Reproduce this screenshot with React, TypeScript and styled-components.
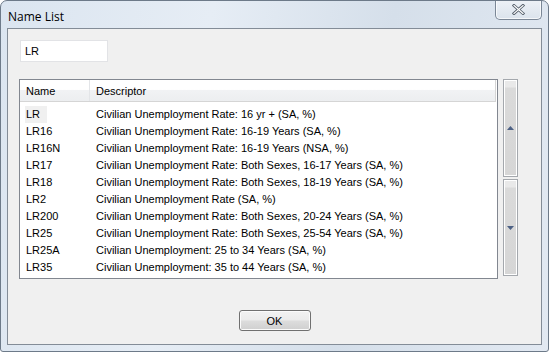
import React from 'react';
import styled, { createGlobalStyle } from 'styled-components';

const GlobalStyle = createGlobalStyle`
  html, body {
    margin: 0;
    padding: 0;
    background: #ffffff;
  }
  body {
    font-family: 'Liberation Sans', Arial, sans-serif;
  }
`;

const ROWS: [string, string][] = [
  ['LR', 'Civilian Unemployment Rate: 16 yr + (SA, %)'],
  ['LR16', 'Civilian Unemployment Rate: 16-19 Years (SA, %)'],
  ['LR16N', 'Civilian Unemployment Rate: 16-19 Years (NSA, %)'],
  ['LR17', 'Civilian Unemployment Rate: Both Sexes, 16-17 Years (SA, %)'],
  ['LR18', 'Civilian Unemployment Rate: Both Sexes, 18-19 Years (SA, %)'],
  ['LR2', 'Civilian Unemployment Rate (SA, %)'],
  ['LR200', 'Civilian Unemployment Rate: Both Sexes, 20-24 Years (SA, %)'],
  ['LR25', 'Civilian Unemployment Rate: Both Sexes, 25-54 Years (SA, %)'],
  ['LR25A', 'Civilian Unemployment: 25 to 34 Years (SA, %)'],
  ['LR35', 'Civilian Unemployment: 35 to 44 Years (SA, %)'],
];

const Window = styled.div`
  width: 549px;
  height: 352px;
  box-sizing: border-box;
  border: 1px solid #6d7a89;
  border-radius: 7px 7px 3px 3px;
  background: linear-gradient(100deg, #dbe5f0 0%, #e6edf5 35%, #d5dfea 65%, #e2e9f2 100%);
  display: flex;
  flex-direction: column;
  overflow: hidden;
`;

const TitleBar = styled.div`
  height: 27px;
  display: flex;
  align-items: flex-start;
  padding-left: 7px;
`;

const Title = styled.div`
  font-family: 'Open Sans', 'Noto Sans', sans-serif;
  font-size: 12px;
  color: #000;
  margin-top: 7px;
`;

const CloseButton = styled.div`
  margin-left: auto;
  margin-right: 6px;
  margin-top: -1px;
  width: 47px;
  height: 20px;
  box-sizing: border-box;
  border: 1px solid #7b8796;
  border-top: none;
  border-radius: 0 0 5px 5px;
  background: linear-gradient(#eef2f7, #dbe3ec);
  box-shadow: inset 0 0 0 1px rgba(255, 255, 255, 0.7);
  display: flex;
  align-items: center;
  justify-content: center;
`;

const Client = styled.div`
  flex: 1;
  margin: 0 6px 6px 6px;
  border: 1px solid #838c97;
  background: #f0f0f0;
  display: flex;
  flex-direction: column;
  padding: 11px 0 0 11px;
`;

const SearchBox = styled.div`
  width: 88px;
  height: 22px;
  box-sizing: border-box;
  margin-left: 1px;
  border: 1px solid #e2e3e6;
  background: #fff;
  font-size: 11px;
  color: #000;
  padding: 4px 0 0 4px;
`;

const ListRow = styled.div`
  display: flex;
  margin-top: 17px;
  align-items: flex-start;
`;

const ListBox = styled.div`
  width: 479px;
  height: 200px;
  box-sizing: border-box;
  border: 1px solid #828790;
  background: #fff;
  overflow: hidden;
`;

const Header = styled.div`
  display: flex;
  height: 22px;
  width: 476px;
  box-sizing: border-box;
  background: linear-gradient(#ffffff 0%, #ffffff 45%, #f1f2f4 50%, #eceef0 100%);
  border-bottom: 1px solid #d5d5d5;
  border-right: 1px solid #d5d5d5;
  font-size: 11px;
`;

const HeaderCell = styled.div<{ $w?: number }>`
  ${(p) => (p.$w ? `width: ${p.$w}px;` : 'flex: 1;')}
  box-sizing: border-box;
  padding: 5px 0 0 6px;
  border-right: ${(p) => (p.$w ? '1px solid #e3e5e8' : 'none')};
`;

const Rows = styled.div`
  padding-top: 4px;
`;

const Row = styled.div`
  display: flex;
  height: 17px;
  font-size: 11px;
  line-height: 17px;
  color: #000;
`;

const NameCell = styled.div<{ $selected?: boolean }>`
  width: 70px;
  box-sizing: border-box;
  padding-left: 6px;
  span {
    display: inline-block;
    padding: 0 7px 0 1px;
    margin-left: -1px;
    background: ${(p) => (p.$selected ? '#f0f0f0' : 'transparent')};
  }
`;

const DescCell = styled.div`
  flex: 1;
  padding-left: 6px;
  white-space: nowrap;
`;

const ScrollBar = styled.div`
  margin-left: 5px;
  width: 15px;
  display: flex;
  flex-direction: column;
  gap: 2px;
`;

const ScrollPart = styled.div<{ $h: number }>`
  height: ${(p) => p.$h}px;
  box-sizing: border-box;
  border: 1px solid #a4a8ad;
  box-shadow: inset 0 0 0 1px #fff;
  background: linear-gradient(#e9e9e9 0px, #e9e9e9 7px, #dadada 8px, #d6d6d6 100%);
  display: flex;
  align-items: center;
  justify-content: center;
`;

const Footer = styled.div`
  display: flex;
  justify-content: center;
  padding-top: 31px;
  padding-right: 11px;
`;

const OkButton = styled.div`
  width: 72px;
  height: 21px;
  box-sizing: border-box;
  border: 1px solid #707070;
  border-radius: 3px;
  background: linear-gradient(#f2f2f2 0%, #ebebeb 48%, #dddddd 52%, #cfcfcf 100%);
  box-shadow: inset 0 0 0 1px #fbfbfb;
  font-size: 11px;
  display: flex;
  align-items: center;
  justify-content: center;
  color: #000;
`;

function Arrow({ up }: { up?: boolean }) {
  return (
    <svg width="7" height="4" viewBox="0 0 7 4">
      <path d={up ? 'M0 4 L3.5 0 L7 4 Z' : 'M0 0 L3.5 4 L7 0 Z'} fill="#4d6185" />
    </svg>
  );
}

export default function App() {
  return (
    <>
      <GlobalStyle />
      <Window>
        <TitleBar>
          <Title>Name List</Title>
          <CloseButton>
            <svg width="13" height="11" viewBox="0 0 13 11">
              <path
                d="M2 1.5 L11 9.5 M11 1.5 L2 9.5"
                stroke="#56606c"
                strokeWidth="3"
                strokeLinecap="square"
              />
              <path
                d="M2 1.5 L11 9.5 M11 1.5 L2 9.5"
                stroke="#ffffff"
                strokeWidth="1.2"
                strokeLinecap="square"
              />
            </svg>
          </CloseButton>
        </TitleBar>
        <Client>
          <SearchBox>LR</SearchBox>
          <ListRow>
            <ListBox>
              <Header>
                <HeaderCell $w={70}>Name</HeaderCell>
                <HeaderCell>Descriptor</HeaderCell>
              </Header>
              <Rows>
                {ROWS.map(([name, desc], i) => (
                  <Row key={name}>
                    <NameCell $selected={i === 0}>
                      <span>{name}</span>
                    </NameCell>
                    <DescCell>{desc}</DescCell>
                  </Row>
                ))}
              </Rows>
            </ListBox>
            <ScrollBar>
              <ScrollPart $h={98}>
                <Arrow up />
              </ScrollPart>
              <ScrollPart $h={97}>
                <Arrow />
              </ScrollPart>
            </ScrollBar>
          </ListRow>
          <Footer>
            <OkButton>OK</OkButton>
          </Footer>
        </Client>
      </Window>
    </>
  );
}
